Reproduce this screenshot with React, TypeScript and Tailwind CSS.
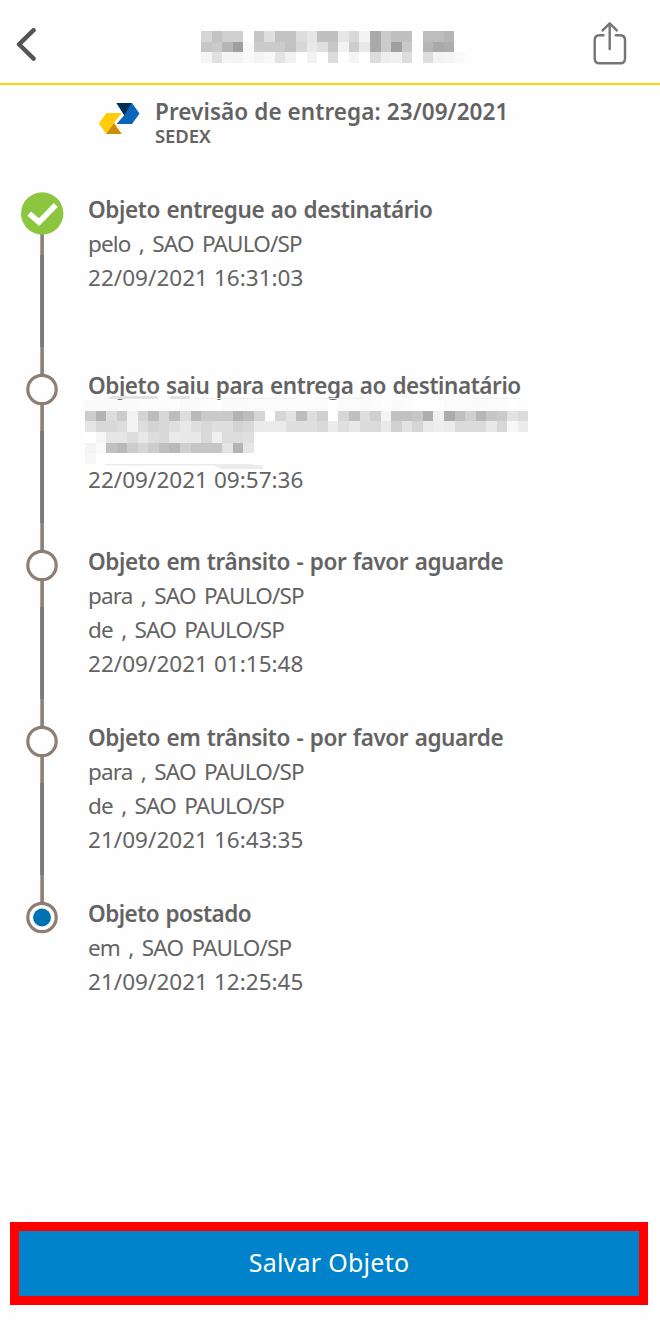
import React from "react";

const HEADER_MOSAIC = [
  "d6 c3 cf cf ff c6 df c3 c3 dd e6 c0 c0 e6 d9 f3 a9 cb c0 c0 fe bd bd b5 fe",
  "c6 cb b5 9f f9 cb cb cb c2 d7 e9 df c7 f3 cd e8 a9 cb 9f c9 fe b5 a9 ad fe",
  "f5 e0 f5 f3 f9 f3 f8 e4 f2 ff f3 ff dc ff f4 ff dc ee f1 dd ff dd f4 f5 f9",
];

const ADDRESS_MOSAIC = [
  "fa fa fa fa fa fc fc fc fd fa fa fd fd fa fa fb fb fc fc fc fb fb fb fe fb fb fa fc fe fa fc fe fe fe fb fb fa fa fb fb fe fd",
  "cc b3 dd cc f3 d3 bc d8 bd dd b9 c9 c9 c9 b3 bd d5 ff d6 e3 bd dd d0 ff d6 c0 dd cf f5 c2 c2 c7 ae f0 ac bf cf b7 c6 ca e2 da",
  "e4 d8 d8 dd f3 dd d3 d8 df e8 df d8 df df d3 d8 ea eb eb df df df d9 eb df e8 db db ea d2 e3 d5 ea ee eb db db db e8 d8 f7 ec",
  "ff f6 e6 e6 dd e8 dd d8 ea e8 e8 d9 f0 dd dd e0",
  "f3 fa c0 b8 cc d6 cc bf b8 cf c6 c6 c6 e4 b4 e6",
  "f7 ff fe fe fe fe fe fe fe fe fe fe fe fe fe fe",
];

function Mosaic({ rows, columns, className }: { rows: string[]; columns: number; className: string }) {
  return (
    <svg
      className={className}
      viewBox={`0 0 ${columns} ${rows.length}`}
      preserveAspectRatio="none"
      shapeRendering="crispEdges"
      aria-hidden="true"
    >
      {rows.flatMap((row, y) =>
        row
          .split(" ")
          .map((tone, x) => <rect key={`${x}-${y}`} x={x} y={y} width="1" height="1" fill={`#${tone}${tone}${tone}`} />),
      )}
    </svg>
  );
}

type Kind = "done" | "step" | "start";

function Marker({ kind }: { kind: Kind }) {
  return (
    <svg className="block h-[176px] w-[84px] shrink-0 overflow-visible" viewBox="0 0 84 176" aria-hidden="true">
      {kind !== "start" && (
        <>
          <rect x="40.3" y="34" width="3.6" height="142" fill="#8b7f76" />
          <rect x="40.3" y="63" width="3.6" height="92" fill="#76787a" />
        </>
      )}
      {kind !== "done" && (
        <>
          <rect x="40.3" y="0" width="3.6" height="10" fill="#8b7f76" />
          <circle cx="42" cy="21.5" r="14.2" fill="#fefefe" stroke="#8b7f76" strokeWidth="3.2" />
        </>
      )}
      {kind === "start" && <circle cx="42" cy="21.5" r="9" fill="#0072b3" />}
      {kind === "done" && (
        <>
          <circle cx="42.2" cy="21.5" r="21.2" fill="#8cc63f" />
          <path d="M29.2 21.6 L39 30.2 L55.8 13" fill="none" stroke="#fff" strokeWidth="5.6" />
        </>
      )}
    </svg>
  );
}

function Step({ kind, title, titleClass, children }: { kind: Kind; title: string; titleClass: string; children: React.ReactNode }) {
  return (
    <li className="flex h-[176px]">
      <Marker kind={kind} />
      <div className="ml-1 mt-px whitespace-nowrap text-[22.5px] leading-[34px]">
        <h2 className={`font-semibold ${titleClass}`}>{title}</h2>
        {children}
      </div>
    </li>
  );
}

function Place({ children }: { children: string }) {
  return <p className="tracking-[-0.85px] [word-spacing:3.3px]">{children}</p>;
}

function Stamp({ children }: { children: string }) {
  return <p className="tracking-[0.03px]">{children}</p>;
}

export default function App() {
  return (
    <div className="flex h-[1325px] w-[660px] flex-col bg-[#fefefe] font-['Noto_Sans',sans-serif] text-[#636363]">
      <header className="flex h-[85px] shrink-0 items-start border-b-2 border-[#ffd400]">
        <button aria-label="Voltar" className="ml-[15.5px] mt-[27px]">
          <svg className="block h-[35px] w-5" viewBox="0 0 20 35" fill="none" stroke="#555" strokeWidth="4.4" strokeLinecap="round" strokeLinejoin="round">
            <path d="M17.6 3.2 L3 17.3 L17.6 31.6" />
          </svg>
        </button>
        <Mosaic rows={HEADER_MOSAIC} columns={25} className="ml-[165px] mt-[31px] block h-[32px] w-[264px]" />
        <button aria-label="Compartilhar" className="ml-[127.5px] mt-[21px]">
          <svg className="block h-[45px] w-[36px]" viewBox="0 0 36 45" fill="none" stroke="#757575" strokeWidth="2.4" strokeLinecap="round" strokeLinejoin="round">
            <path d="M11.5 14.2 H7.5 Q2.7 14.2 2.7 19 V37.5 Q2.7 42.3 7.5 42.3 H28.2 Q33 42.3 33 37.5 V19 Q33 14.2 28.2 14.2 H23.8" />
            <path d="M17.7 28 V2.5 M10.6 9.4 L17.7 2.3 L24.8 9.4" />
          </svg>
        </button>
      </header>

      <section className="flex h-[107px] shrink-0 pl-[98px] pt-[11px]">
        <svg className="mt-[6px] block h-[33px] w-[42px] shrink-0" viewBox="0 0 42 33" aria-hidden="true">
          <path d="M18.5 1 H34 L41.5 11.5 L34 22 H18.5 L26.3 13.2 Z" fill="#0b66b8" />
          <path d="M18.5 1 H33.5 L26.3 13.2 Z" fill="#032e55" />
          <path d="M.8 21.5 L8.3 11 H23.7 L16.2 20.5 L23.7 32 H8.3 Z" fill="#ffcb0b" />
          <path d="M8.3 32 L15.8 21.5 L23.7 32 Z" fill="#cb8d0c" />
        </svg>
        <div className="ml-[15px] mt-px whitespace-nowrap font-semibold">
          <h1 className="text-[22.5px] leading-[30px] tracking-[0.08px]">Previsão de entrega: 23/09/2021</h1>
          <p className="text-[18.5px] leading-[17px] tracking-[-0.1px]">SEDEX</p>
        </div>
      </section>

      <ol className="flex flex-col">
        <Step kind="done" title="Objeto entregue ao destinatário" titleClass="tracking-[-0.38px] [word-spacing:1px]">
          <Place>pelo , SAO PAULO/SP</Place>
          <Stamp>22/09/2021 16:31:03</Stamp>
        </Step>
        <Step kind="step" title="Objeto saiu para entrega ao destinatário" titleClass="tracking-[-0.44px] [word-spacing:1px]">
          <div className="-ml-[3.5px] -mt-[8px] mb-[-5px] h-[73px] w-[443.5px]">
            <svg className="block h-[4px] w-full" viewBox="0 0 443.5 4" aria-hidden="true">
              <path d="M27 1 H73 V4 H23 Z M85 1 H105 V4 H85 Z" fill="#e2e2e2" />
              <path d="M110 3 H210 V4 H110 Z M230 3 H280 V4 H230 Z M388 3 H435 V4 H388 Z" fill="#eeeeee" />
            </svg>
            <Mosaic rows={ADDRESS_MOSAIC} columns={42} className="mt-px block h-[64px] w-full" />
            <svg className="block h-[5px] w-full" viewBox="0 0 443.5 5" aria-hidden="true">
              <path d="M20 0 H168 V1.5 H20 Z M127 1 H178 V5 H137 Z" fill="#ececec" />
            </svg>
          </div>
          <Stamp>22/09/2021 09:57:36</Stamp>
        </Step>
        <Step kind="step" title="Objeto em trânsito - por favor aguarde" titleClass="tracking-[-0.4px] [word-spacing:1px]">
          <Place>para , SAO PAULO/SP</Place>
          <Place>de , SAO PAULO/SP</Place>
          <Stamp>22/09/2021 01:15:48</Stamp>
        </Step>
        <Step kind="step" title="Objeto em trânsito - por favor aguarde" titleClass="tracking-[-0.4px] [word-spacing:1px]">
          <Place>para , SAO PAULO/SP</Place>
          <Place>de , SAO PAULO/SP</Place>
          <Stamp>21/09/2021 16:43:35</Stamp>
        </Step>
        <Step kind="start" title="Objeto postado" titleClass="tracking-[-0.53px] [word-spacing:1px]">
          <Place>em , SAO PAULO/SP</Place>
          <Stamp>21/09/2021 12:25:45</Stamp>
        </Step>
      </ol>

      <button className="mb-[20.5px] ml-[10px] mr-[12px] mt-auto h-[83px] border-[9px] border-[#ff0000] bg-[#0083ca] pb-[3px] text-[25px] leading-[60px] tracking-[0.25px] text-white">
        Salvar Objeto
      </button>
    </div>
  );
}
